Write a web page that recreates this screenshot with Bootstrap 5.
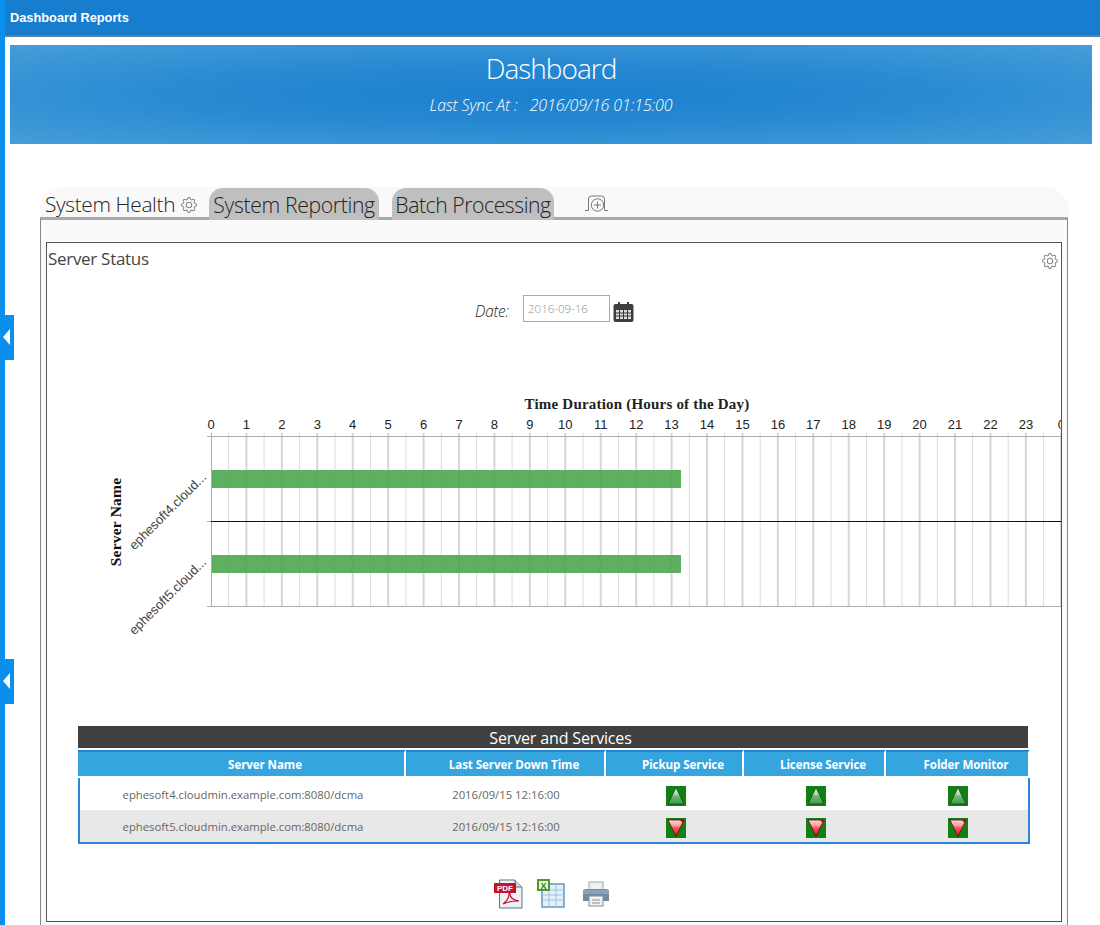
<!DOCTYPE html>
<html lang="en">
<head>
<meta charset="utf-8">
<title>Dashboard Reports</title>
<link href="https://cdn.jsdelivr.net/npm/bootstrap@5.3.0/dist/css/bootstrap.min.css" rel="stylesheet">
<style>
html,body{height:925px;overflow:hidden;background:#fff}
body{font-family:"Open Sans","Liberation Sans",sans-serif;font-weight:300;color:#444}
.side-strip{width:5px;flex:none;background:#0a8fec}
.side-handle{position:absolute;left:0;width:14px;height:45px;background:#0a8fec}
.side-handle::after{content:"";position:absolute;left:3px;top:14px;border-style:solid;border-width:8px 7px 8px 0;border-color:transparent #fff transparent transparent}
.handle-a{top:315px}.handle-b{top:659px}
.top-strip{height:37px;background:#177ecf;border-bottom:2px solid #5f7f99;color:#fff;font-family:"Liberation Sans",sans-serif;font-weight:700;font-size:12.800px;padding:10px 0 0 5px;line-height:15px}
.hero{height:99px;margin:8px 8px 0 5px;color:#fff;text-align:center;background:radial-gradient(ellipse 70% 68% at 50% 50%,#1a80cf 0%,#2a8ad2 50%,#449dd8 100%)}
.hero-title{font-size:28px;line-height:38px;padding-top:4px;font-weight:300;letter-spacing:-1px;margin:0}
.hero-sub{font-size:16px;font-style:italic;line-height:22px;margin:7px 0 0;letter-spacing:-.12px}
.tab-strip{height:30px;margin:43px 31px 0 35px;background:#f9f9f9;border-radius:20px 24px 0 0;position:relative;z-index:1}
.tab-plain{font-size:20.900px;color:#222;width:169px;padding:2px 0 0 5px;line-height:30px;letter-spacing:-.35px;white-space:nowrap}
.tab-grey{background:#bfbfbf;border-radius:14px 14px 0 0;height:32px;margin-top:1px;font-size:21.200px;line-height:33px;color:#222;text-align:center;white-space:nowrap;letter-spacing:-.35px}
.tab-a{width:170px}.tab-b{width:162px;margin-left:13px;letter-spacing:-.45px}
.add-tab{margin:8px 0 0 30px}
.gear-mini{width:16px;height:16px;fill:#8a8a8a;vertical-align:-1px;margin-left:1px}
.tab-panel{margin:0 32px 0 35px;height:800px;padding:22px 5px 0;background:#fafafa;border:1px solid #888;border-top:3px solid #a9a9a9;position:relative}
.inner-box{height:680px;background:#fff;border:1px solid #555;position:relative}
.box-title{font-size:17px;line-height:24px;padding:4px 0 0 1px;color:#444;letter-spacing:-.3px;margin:0}
.gear-box{width:16px;height:16px;fill:#8a8a8a;margin:10px 3px 0 0}
.date-row{margin-top:24px;height:27px;padding-left:428px}
.date-label{font-size:15.500px;font-style:italic;color:#222;width:48px;line-height:33px;letter-spacing:-.3px}
.date-field{width:87px;height:27px;border:1px solid #aaa;border-radius:0;padding:0 4px;font-size:11.500px;color:#8f8f8f;font-weight:300;background:#fff;box-shadow:none}
.date-field::placeholder{color:#8f8f8f;opacity:1}
.cal-ico{margin:7px 0 0 3px}
.chart-wrap{margin-top:68px;height:250px;overflow:hidden}
.chart-wrap svg{display:block}
.tick-num{font:13px "Liberation Sans",sans-serif;fill:#222;text-anchor:middle}
.cat-name{font:13px "Liberation Sans",sans-serif;fill:#444;text-anchor:end}
.axis-title{font:bold 15px "Liberation Serif",serif;fill:#222;text-anchor:middle;letter-spacing:.2px}
.axis-side{font-size:15.500px;fill:#111}
.svc-wrap{margin:86px 31px 0;width:952px}
.svc-title{width:950px;height:22px;padding-left:15px;background:#404040;color:#fff;text-align:center;font-size:16px;line-height:24px;font-weight:400;letter-spacing:-.15px}
.svc-table{width:952px;table-layout:fixed;margin:2px 0 0;border-collapse:separate;border-spacing:0}
.svc-table th{background:#35a5e0;background-clip:padding-box;border-top:2px solid #1f87d8;border-bottom:2px solid #fff;color:#fff;font-size:11.600px;font-weight:700;height:28px;padding:2px 0 0 18px;text-align:center;vertical-align:middle;border-right:2px solid #fff;letter-spacing:-.1px}
.svc-table th:first-child{padding-left:48px}
.svc-table td{height:32px;padding:3px 0 0;text-align:center;vertical-align:middle;font-size:11.300px;color:#666;font-weight:400;border:0}
.svc-table td.state-cell{padding:4px 0 0 2px}
.svc-table tbody tr.shade td{background:#e8e8e8;border-bottom:2px solid #2a86d6;height:34px}
.svc-table td:first-child{border-left:2px solid #2a86d6}
.svc-table td:last-child{border-right:2px solid #2a86d6}
.svc-ico{display:block;margin:0 auto}
.export-row{margin-top:35px;padding-left:447px;gap:13px}
</style>
</head>
<body>
<svg width="0" height="0" class="d-block position-absolute">
<defs>
<symbol id="gear" viewBox="0 0 16 16"><path d="M8 4.754a3.246 3.246 0 1 0 0 6.492 3.246 3.246 0 0 0 0-6.492zM5.754 8a2.246 2.246 0 1 1 4.492 0 2.246 2.246 0 0 1-4.492 0z"/><path d="M9.796 1.343c-.527-1.79-3.065-1.79-3.592 0l-.094.319a.873.873 0 0 1-1.255.52l-.292-.16c-1.64-.892-3.433.902-2.54 2.541l.159.292a.873.873 0 0 1-.52 1.255l-.319.094c-1.79.527-1.79 3.065 0 3.592l.319.094a.873.873 0 0 1 .52 1.255l-.16.292c-.892 1.64.901 3.434 2.541 2.54l.292-.159a.873.873 0 0 1 1.255.52l.094.319c.527 1.79 3.065 1.79 3.592 0l.094-.319a.873.873 0 0 1 1.255-.52l.292.16c1.64.893 3.434-.902 2.54-2.541l-.159-.292a.873.873 0 0 1 .52-1.255l.319-.094c1.79-.527 1.79-3.065 0-3.592l-.319-.094a.873.873 0 0 1-.52-1.255l.16-.292c.893-1.64-.902-3.433-2.541-2.54l-.292.159a.873.873 0 0 1-1.255-.52l-.094-.319zm-2.633.283c.246-.835 1.428-.835 1.674 0l.094.319a1.873 1.873 0 0 0 2.693 1.115l.291-.16c.764-.415 1.6.42 1.184 1.185l-.159.292a1.873 1.873 0 0 0 1.116 2.692l.318.094c.835.246.835 1.428 0 1.674l-.319.094a1.873 1.873 0 0 0-1.115 2.693l.16.291c.415.764-.42 1.6-1.185 1.184l-.291-.159a1.873 1.873 0 0 0-2.693 1.116l-.094.318c-.246.835-1.428.835-1.674 0l-.094-.319a1.873 1.873 0 0 0-2.692-1.115l-.292.16c-.764.415-1.6-.42-1.184-1.185l.159-.291A1.873 1.873 0 0 0 1.945 8.93l-.319-.094c-.835-.246-.835-1.428 0-1.674l.319-.094A1.873 1.873 0 0 0 3.06 4.377l-.16-.292c-.415-.764.42-1.6 1.185-1.184l.292.159a1.873 1.873 0 0 0 2.692-1.115l.094-.319z"/></symbol>
<linearGradient id="upFill" x1="0" y1="0" x2="0" y2="1"><stop offset="0" stop-color="#dff0df"/><stop offset=".45" stop-color="#a8d4a8"/><stop offset=".5" stop-color="#72b878"/><stop offset="1" stop-color="#3f9a4f"/></linearGradient>
<linearGradient id="downFill" x1="0" y1="0" x2="0" y2="1"><stop offset="0" stop-color="#ffd8da"/><stop offset=".35" stop-color="#ff9aa2"/><stop offset=".45" stop-color="#ff5a66"/><stop offset="1" stop-color="#e01020"/></linearGradient>
<symbol id="statusUp" viewBox="0 0 20 20"><rect width="20" height="20" fill="#128012"/><path d="M10 1.500 18 18H2Z" fill="url(#upFill)" stroke="#0c4a12" stroke-width=".8"/></symbol>
<symbol id="statusDown" viewBox="0 0 20 20"><rect width="20" height="20" fill="#128012"/><path d="M2 2H18L10 18.500Z" fill="url(#downFill)" stroke="#5a0a0a" stroke-width=".8"/><path d="M14 2h4l-1.500 3Z" fill="#d00000"/></symbol>
</defs>
</svg>
<div class="side-handle handle-a"></div>
<div class="side-handle handle-b"></div>
<div class="d-flex" style="height:925px">
  <div class="side-strip"></div>
  <div class="flex-grow-1 overflow-hidden">
    <div class="top-strip">Dashboard Reports</div>
    <div class="hero">
      <h1 class="hero-title">Dashboard</h1>
      <p class="hero-sub">Last Sync At :&nbsp;&nbsp; 2016/09/16 01:15:00</p>
    </div>
    <div class="tab-strip d-flex">
      <div class="tab-plain">System Health <svg class="gear-mini"><use href="#gear"/></svg></div>
      <div class="tab-grey tab-a">System Reporting</div>
      <div class="tab-grey tab-b">Batch Processing</div>
      <svg class="add-tab" width="26" height="18" viewBox="0 0 26 18" fill="none" stroke="#777" stroke-width="1"><path d="M1 15.500h3.500V4a3 3 0 0 1 3-3h10a3 3 0 0 1 3 3v11.500H24"/><circle cx="13.500" cy="10" r="6.200" fill="#f9f9f9"/><path d="M13.500 6.500v7M10 10h7"/></svg>
    </div>
    <div class="tab-panel">
      <div class="inner-box">
        <div class="d-flex justify-content-between">
          <h2 class="box-title">Server Status</h2>
          <svg class="gear-box"><use href="#gear"/></svg>
        </div>
        <div class="date-row d-flex">
          <label class="date-label" for="dateField">Date:</label>
          <input id="dateField" class="form-control date-field" placeholder="2016-09-16">
          <svg class="cal-ico" width="21" height="20" viewBox="0 0 21 20"><rect x="0.500" y="2" width="20" height="18" rx="2" fill="#3f3f3f"/><rect x="5" y="0" width="2" height="5" fill="#3f3f3f"/><rect x="14" y="0" width="2" height="5" fill="#3f3f3f"/><rect x="3" y="8" width="15" height="9" fill="#ddd"/><path d="M3 11h15M3 14h15M6.500 8v9M10.500 8v9M14.500 8v9" stroke="#333" stroke-width="1"/></svg>
        </div>
        <div class="chart-wrap">
          <svg width="1014" height="250" viewBox="47 390 1014 250">
            <text class="axis-title" x="637" y="409">Time Duration (Hours of the Day)</text>
            <g class="tick-labels">
              <text class="tick-num" x="211" y="429">0</text><text class="tick-num" x="246.400" y="429">1</text><text class="tick-num" x="281.900" y="429">2</text><text class="tick-num" x="317.300" y="429">3</text><text class="tick-num" x="352.700" y="429">4</text><text class="tick-num" x="388.200" y="429">5</text><text class="tick-num" x="423.600" y="429">6</text><text class="tick-num" x="459" y="429">7</text><text class="tick-num" x="494.400" y="429">8</text><text class="tick-num" x="529.900" y="429">9</text><text class="tick-num" x="565.300" y="429">10</text><text class="tick-num" x="600.700" y="429">11</text><text class="tick-num" x="636.200" y="429">12</text><text class="tick-num" x="671.600" y="429">13</text><text class="tick-num" x="707" y="429">14</text><text class="tick-num" x="742.500" y="429">15</text><text class="tick-num" x="777.900" y="429">16</text><text class="tick-num" x="813.300" y="429">17</text><text class="tick-num" x="848.700" y="429">18</text><text class="tick-num" x="884.200" y="429">19</text><text class="tick-num" x="919.600" y="429">20</text><text class="tick-num" x="955" y="429">21</text><text class="tick-num" x="990.500" y="429">22</text><text class="tick-num" x="1025.900" y="429">23</text><text class="tick-num" x="1061.300" y="429">0</text>
            </g>
            <path fill="none" stroke="#dcdcdc" stroke-width="1" d="M228.700 433V606M264.100 433V606M299.600 433V606M335 433V606M370.400 433V606M405.900 433V606M441.300 433V606M476.700 433V606M512.100 433V606M547.600 433V606M583 433V606M618.400 433V606M653.900 433V606M689.300 433V606M724.700 433V606M760.200 433V606M795.600 433V606M831 433V606M866.400 433V606M901.900 433V606M937.300 433V606M972.700 433V606M1008.200 433V606M1043.600 433V606"/>
            <path fill="none" stroke="#d6d6d6" stroke-width="2" d="M246.400 433V606M281.900 433V606M317.300 433V606M352.700 433V606M388.200 433V606M423.600 433V606M459 433V606M494.400 433V606M529.900 433V606M565.300 433V606M600.700 433V606M636.200 433V606M671.600 433V606M707 433V606M742.500 433V606M777.900 433V606M813.300 433V606M848.700 433V606M884.200 433V606M919.600 433V606M955 433V606M990.500 433V606M1025.900 433V606M1061 433V606"/>
            <path fill="none" stroke="#adadad" stroke-width="1" d="M207 436.500H1061M207 606.500H1061M211.500 433V607"/>
            <path fill="none" stroke="#adadad" stroke-width="1" d="M207 521.500H211"/>
            <path fill="none" stroke="#111" stroke-width="1" d="M211 521.500H1061"/>
            <rect x="212" y="470" width="469" height="18" fill="#4ea64f" fill-opacity=".9"/>
            <rect x="212" y="555" width="469" height="18" fill="#4ea64f" fill-opacity=".9"/>
            <text class="cat-name" transform="translate(207 478) rotate(-45)">ephesoft4.cloud...</text>
            <text class="cat-name" transform="translate(207 563) rotate(-45)">ephesoft5.cloud...</text>
            <text class="axis-title axis-side" transform="translate(121 522) rotate(-90)">Server Name</text>
          </svg>
        </div>
        <div class="svc-wrap">
          <div class="svc-title">Server and Services</div>
          <table class="svc-table">
            <colgroup><col style="width:328px"><col style="width:200px"><col style="width:138px"><col style="width:142px"><col style="width:144px"></colgroup>
            <thead><tr><th>Server Name</th><th>Last Server Down Time</th><th>Pickup Service</th><th>License Service</th><th>Folder Monitor</th></tr></thead>
            <tbody>
              <tr><td>ephesoft4.cloudmin.example.com:8080/dcma</td><td>2016/09/15 12:16:00</td><td class="state-cell"><svg class="svc-ico" width="20" height="20"><use href="#statusUp"/></svg></td><td class="state-cell"><svg class="svc-ico" width="20" height="20"><use href="#statusUp"/></svg></td><td class="state-cell"><svg class="svc-ico" width="20" height="20"><use href="#statusUp"/></svg></td></tr>
              <tr class="shade"><td>ephesoft5.cloudmin.example.com:8080/dcma</td><td>2016/09/15 12:16:00</td><td class="state-cell"><svg class="svc-ico" width="20" height="20"><use href="#statusDown"/></svg></td><td class="state-cell"><svg class="svc-ico" width="20" height="20"><use href="#statusDown"/></svg></td><td class="state-cell"><svg class="svc-ico" width="20" height="20"><use href="#statusDown"/></svg></td></tr>
            </tbody>
          </table>
        </div>
        <div class="export-row d-flex">
          <svg width="30" height="30" viewBox="0 0 30 30"><path d="M5.500 1H21l7 7v21H5.500Z" fill="#eef2f5" stroke="#5b7488"/><path d="M21 1v7h7" fill="#cfd8de" stroke="#5b7488"/><rect x="0" y="4" width="22" height="10" fill="#c8102e"/><text x="11" y="12" font-family="Liberation Sans,sans-serif" font-size="8" font-weight="700" fill="#fff" text-anchor="middle">PDF</text><path d="M9 25c4-3 6-7 6-10 0-2 1-2 1 0 0 4 3 6 9 7-5 0-10 0-16 3Z" fill="none" stroke="#c8102e" stroke-width="1.200"/></svg>
          <svg width="28" height="30" viewBox="0 0 28 30"><rect x="5" y="5" width="22" height="23" fill="#e6f0f8" stroke="#5f97c2" stroke-width="1.500"/><path d="M5 11h22M5 16h22M5 21h22M12 5v23M19 5v23" stroke="#9cc3e0" fill="none"/><rect x="0" y="0" width="13" height="12" fill="#4f9a2a"/><rect x="2" y="2" width="9" height="8" fill="#eaf5e0"/><text x="6.500" y="9.500" font-family="Liberation Sans,sans-serif" font-size="9" font-weight="700" fill="#2e7d1e" text-anchor="middle">X</text></svg>
          <svg class="ms-1" width="28" height="30" viewBox="0 0 28 30"><rect x="7" y="3" width="14" height="9" fill="#eef1f4" stroke="#9aa5ae"/><path d="M4 10h20a3 3 0 0 1 3 3v9H1v-9a3 3 0 0 1 3-3Z" fill="#6f8ba3"/><rect x="1" y="11" width="26" height="4" fill="#8aa3b8"/><rect x="7" y="17" width="14" height="10" fill="#f2f2f2" stroke="#8a8f94"/><path d="M10 21h8M10 24h8" stroke="#8a8f94"/></svg>
        </div>
      </div>
    </div>
  </div>
</div>
</body>
</html>
